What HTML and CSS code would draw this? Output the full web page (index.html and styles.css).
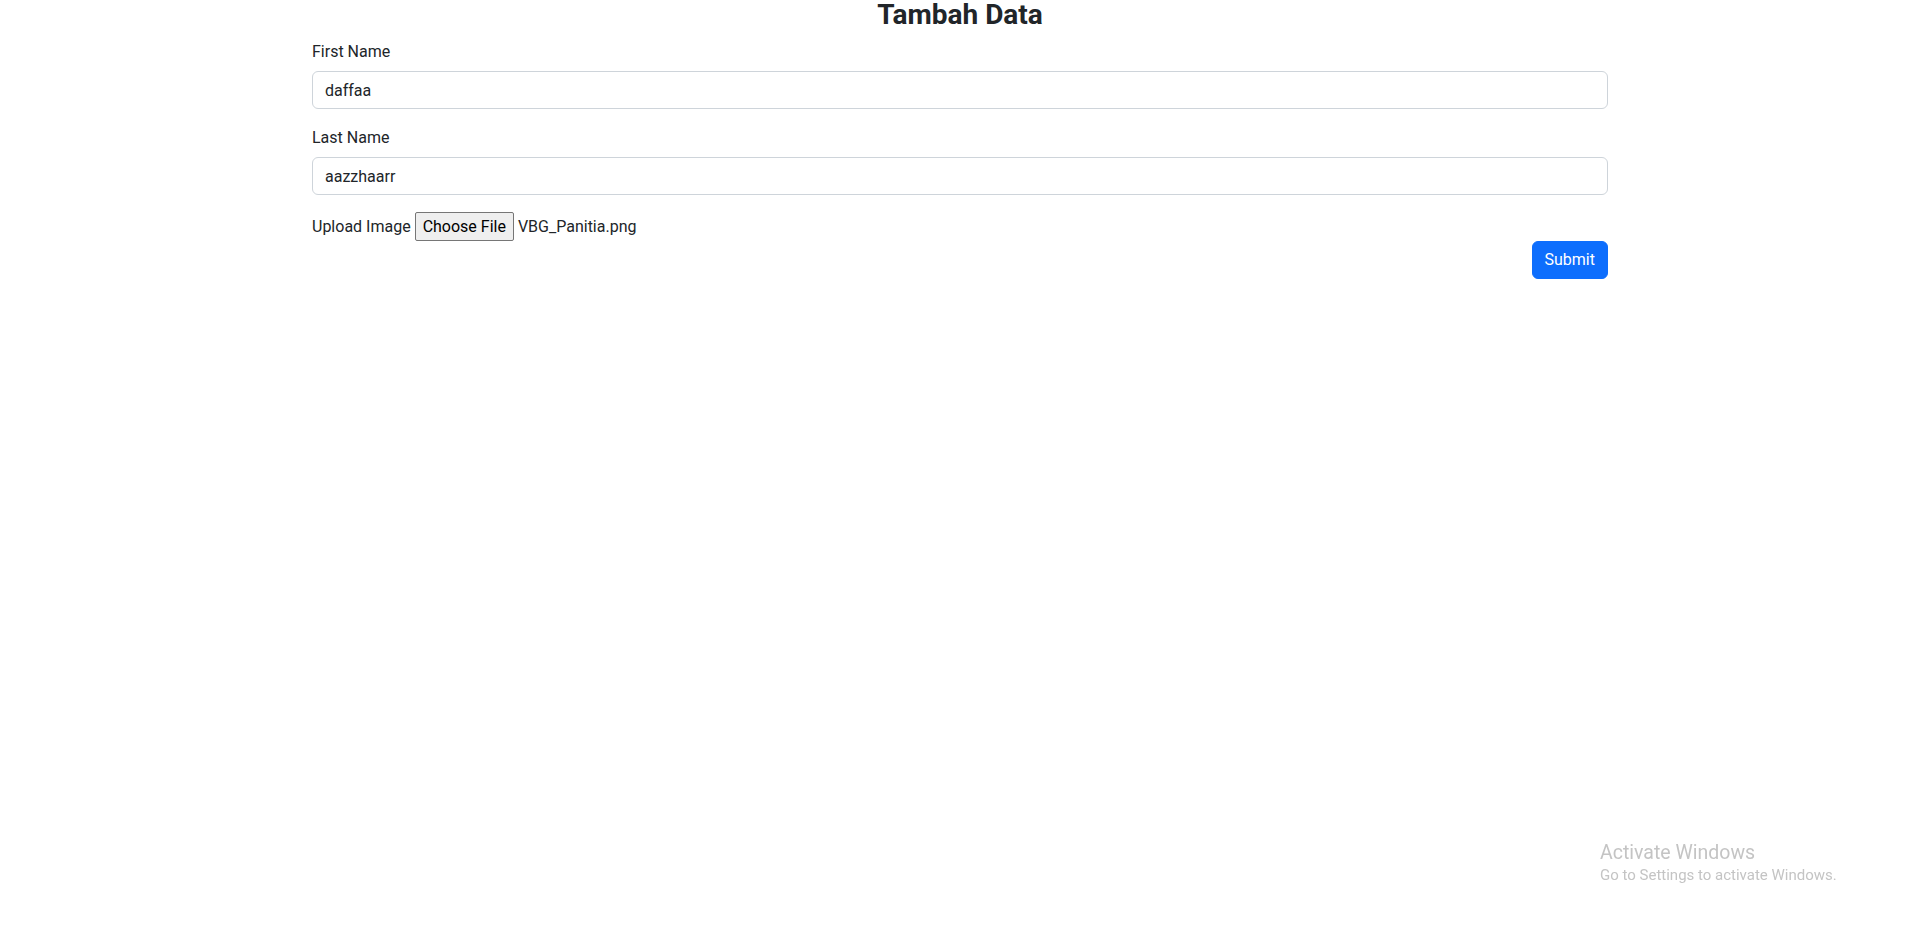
FILE: index.html
```html
<!DOCTYPE html>
<html lang="id">
<head>
<meta charset="utf-8">
<title>Tambah Data</title>
<link rel="stylesheet" href="styles.css">
</head>
<body>
<div class="container">
  <h3 class="title">Tambah Data</h3>
  <form class="form">
    <div class="field">
      <label class="form-label" for="first">First Name</label>
      <input class="form-control" id="first" type="text" value="daffaa">
    </div>
    <div class="field">
      <label class="form-label" for="last">Last Name</label>
      <input class="form-control" id="last" type="text" value="aazzhaarr">
    </div>
    <div class="upload">
      <span class="upload-label">Upload Image</span>
      <span class="file-btn">Choose File</span>
      <span class="file-name">VBG_Panitia.png</span>
    </div>
    <div class="actions">
      <button class="btn-primary" type="button">Submit</button>
    </div>
  </form>
</div>
<div class="watermark">
  <div class="wm-title">Activate Windows</div>
  <div class="wm-sub">Go to Settings to activate Windows.</div>
</div>
</body>
</html>
```
FILE: styles.css
```css
* { box-sizing: border-box; }
html, body { margin: 0; padding: 0; background: #fff; }
body {
  font-family: Roboto, "Liberation Sans", sans-serif;
  font-size: 16px;
  line-height: 24px;
  color: #212529;
}
.container {
  width: 1296px;
  margin: 0 auto;
}
.title {
  margin: -2px 0 7px;
  font-size: 28px;
  line-height: 34px;
  font-weight: 700;
  text-align: center;
  color: #212529;
}
.field { margin-bottom: 16px; }
.form-label {
  display: block;
  margin-bottom: 8px;
  padding-top: 1px;
  line-height: 23px;
}
.form-control {
  display: block;
  width: 100%;
  height: 38px;
  padding: 6px 12px;
  font: inherit;
  font-size: 16px;
  line-height: 24px;
  color: #212529;
  background: #fff;
  border: 1px solid #ced4da;
  border-radius: 6px;
  outline: none;
}
.upload {
  display: flex;
  align-items: center;
  gap: 4px;
  height: 30px;
  padding-top: 1px;
}
.file-btn {
  display: inline-flex;
  align-items: center;
  height: 29px;
  padding: 0 7px;
  background: #efefef;
  border: 1px solid #767676;
  border-radius: 2px;
  color: #000;
}
.file-name { margin-left: 0; }
.actions {
  display: flex;
  justify-content: flex-end;
}
.btn-primary {
  height: 38px;
  padding: 6px 12px;
  font: inherit;
  font-size: 16px;
  line-height: 24px;
  color: #fff;
  background: #0d6efd;
  border: 1px solid #0d6efd;
  border-radius: 6px;
}
.watermark {
  position: fixed;
  left: 1600px;
  top: 840px;
  color: #c4c4c4;
}
.wm-title {
  font-size: 19.5px;
  line-height: 25px;
  font-weight: 400;
}
.wm-sub {
  font-size: 15px;
  line-height: 20px;
  margin-top: 0;
}
```
